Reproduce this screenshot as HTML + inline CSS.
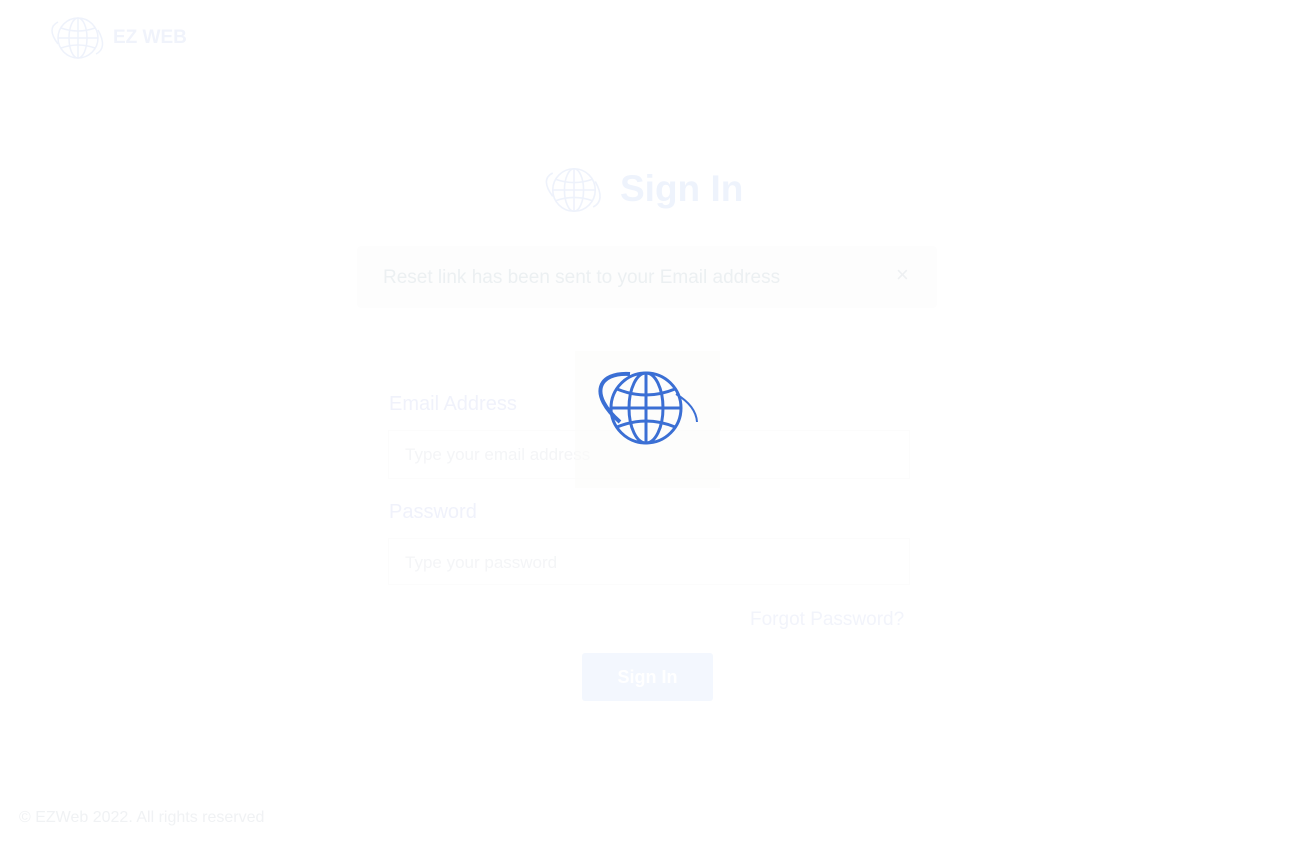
<!DOCTYPE html>
<html><head><meta charset="utf-8"><style>
body{margin:0;width:1295px;height:842px;background:#fff;font-family:"Liberation Sans",sans-serif;position:relative;overflow:hidden}
.a{position:absolute}
</style></head><body>
<svg class="a" style="left:46px;top:14px" width="64" height="48" viewBox="0 0 64 48" fill="none" stroke="#eef2fb" stroke-width="1.5"><circle cx="32" cy="24" r="20"/><ellipse cx="32" cy="24" rx="9" ry="20"/><line x1="32" y1="4" x2="32" y2="44"/><line x1="12" y1="24" x2="52" y2="24"/><path d="M15 14q17 6 34 0M15 34q17-6 34 0"/><path d="M12 8q-12 6 0 22M50 40q12-6 2-24"/></svg>
<div class="a" style="left:113px;top:27px;font-size:19px;font-weight:bold;color:#f0f3fb">EZ WEB</div>
<svg class="a" style="left:540px;top:164px" width="68" height="52" viewBox="0 0 64 48" fill="none" stroke="#eef2fb" stroke-width="1.5"><circle cx="32" cy="24" r="20"/><ellipse cx="32" cy="24" rx="9" ry="20"/><line x1="32" y1="4" x2="32" y2="44"/><line x1="12" y1="24" x2="52" y2="24"/><path d="M15 14q17 6 34 0M15 34q17-6 34 0"/><path d="M12 8q-12 6 0 22M50 40q12-6 2-24"/></svg>
<div class="a" style="left:620px;top:168px;font-size:37px;font-weight:bold;color:#eef3fc">Sign In</div>
<div class="a" style="left:357px;top:246px;width:580px;height:62px;background:#fdfdfd;border-radius:4px"></div>
<div class="a" style="left:383px;top:267px;font-size:19px;color:#ecf0f2">Reset link has been sent to your Email address</div>
<div class="a" style="left:896px;top:262px;font-size:22px;color:#eef0f2">×</div>
<div class="a" style="left:389px;top:393px;font-size:20px;color:#f0f2fb">Email Address</div>
<div class="a" style="left:388px;top:430px;width:520px;height:47px;border:1px solid #fcfcfc"></div>
<div class="a" style="left:405px;top:445px;font-size:17px;color:#f4f5f7">Type your email address</div>
<div class="a" style="left:389px;top:501px;font-size:20px;color:#f0f2fb">Password</div>
<div class="a" style="left:388px;top:538px;width:520px;height:45px;border:1px solid #fcfcfc"></div>
<div class="a" style="left:405px;top:553px;font-size:17px;color:#f4f5f7">Type your password</div>
<div class="a" style="left:750px;top:609px;font-size:19px;color:#f2f4fb">Forgot Password?</div>
<div class="a" style="left:582px;top:653px;width:131px;height:48px;background:#f3f7fe;border-radius:3px;color:#fff;font-weight:bold;font-size:18px;text-align:center;line-height:48px">Sign In</div>
<div class="a" style="left:19px;top:809px;font-size:16px;color:#f0f2f4">© EZWeb 2022. All rights reserved</div>
<div class="a" style="left:575px;top:351px;width:145px;height:137px;background:rgba(252,252,250,0.6)"></div>
<svg class="a" style="left:590px;top:366px" width="112" height="82" viewBox="0 0 112 82" fill="none" stroke="#3b6fd4" stroke-width="3"><circle cx="56" cy="42" r="35"/><ellipse cx="56" cy="42" rx="17" ry="35"/><line x1="56" y1="7" x2="56" y2="77"/><line x1="21" y1="42" x2="91" y2="42"/><path d="M27 23q29 12 58 0M27 61q29-12 58 0"/><path d="M40 8C8 6 -2 28 30 56" stroke-width="4"/><path d="M86 28q20 12 21 28" stroke-width="2"/></svg>
</body></html>
